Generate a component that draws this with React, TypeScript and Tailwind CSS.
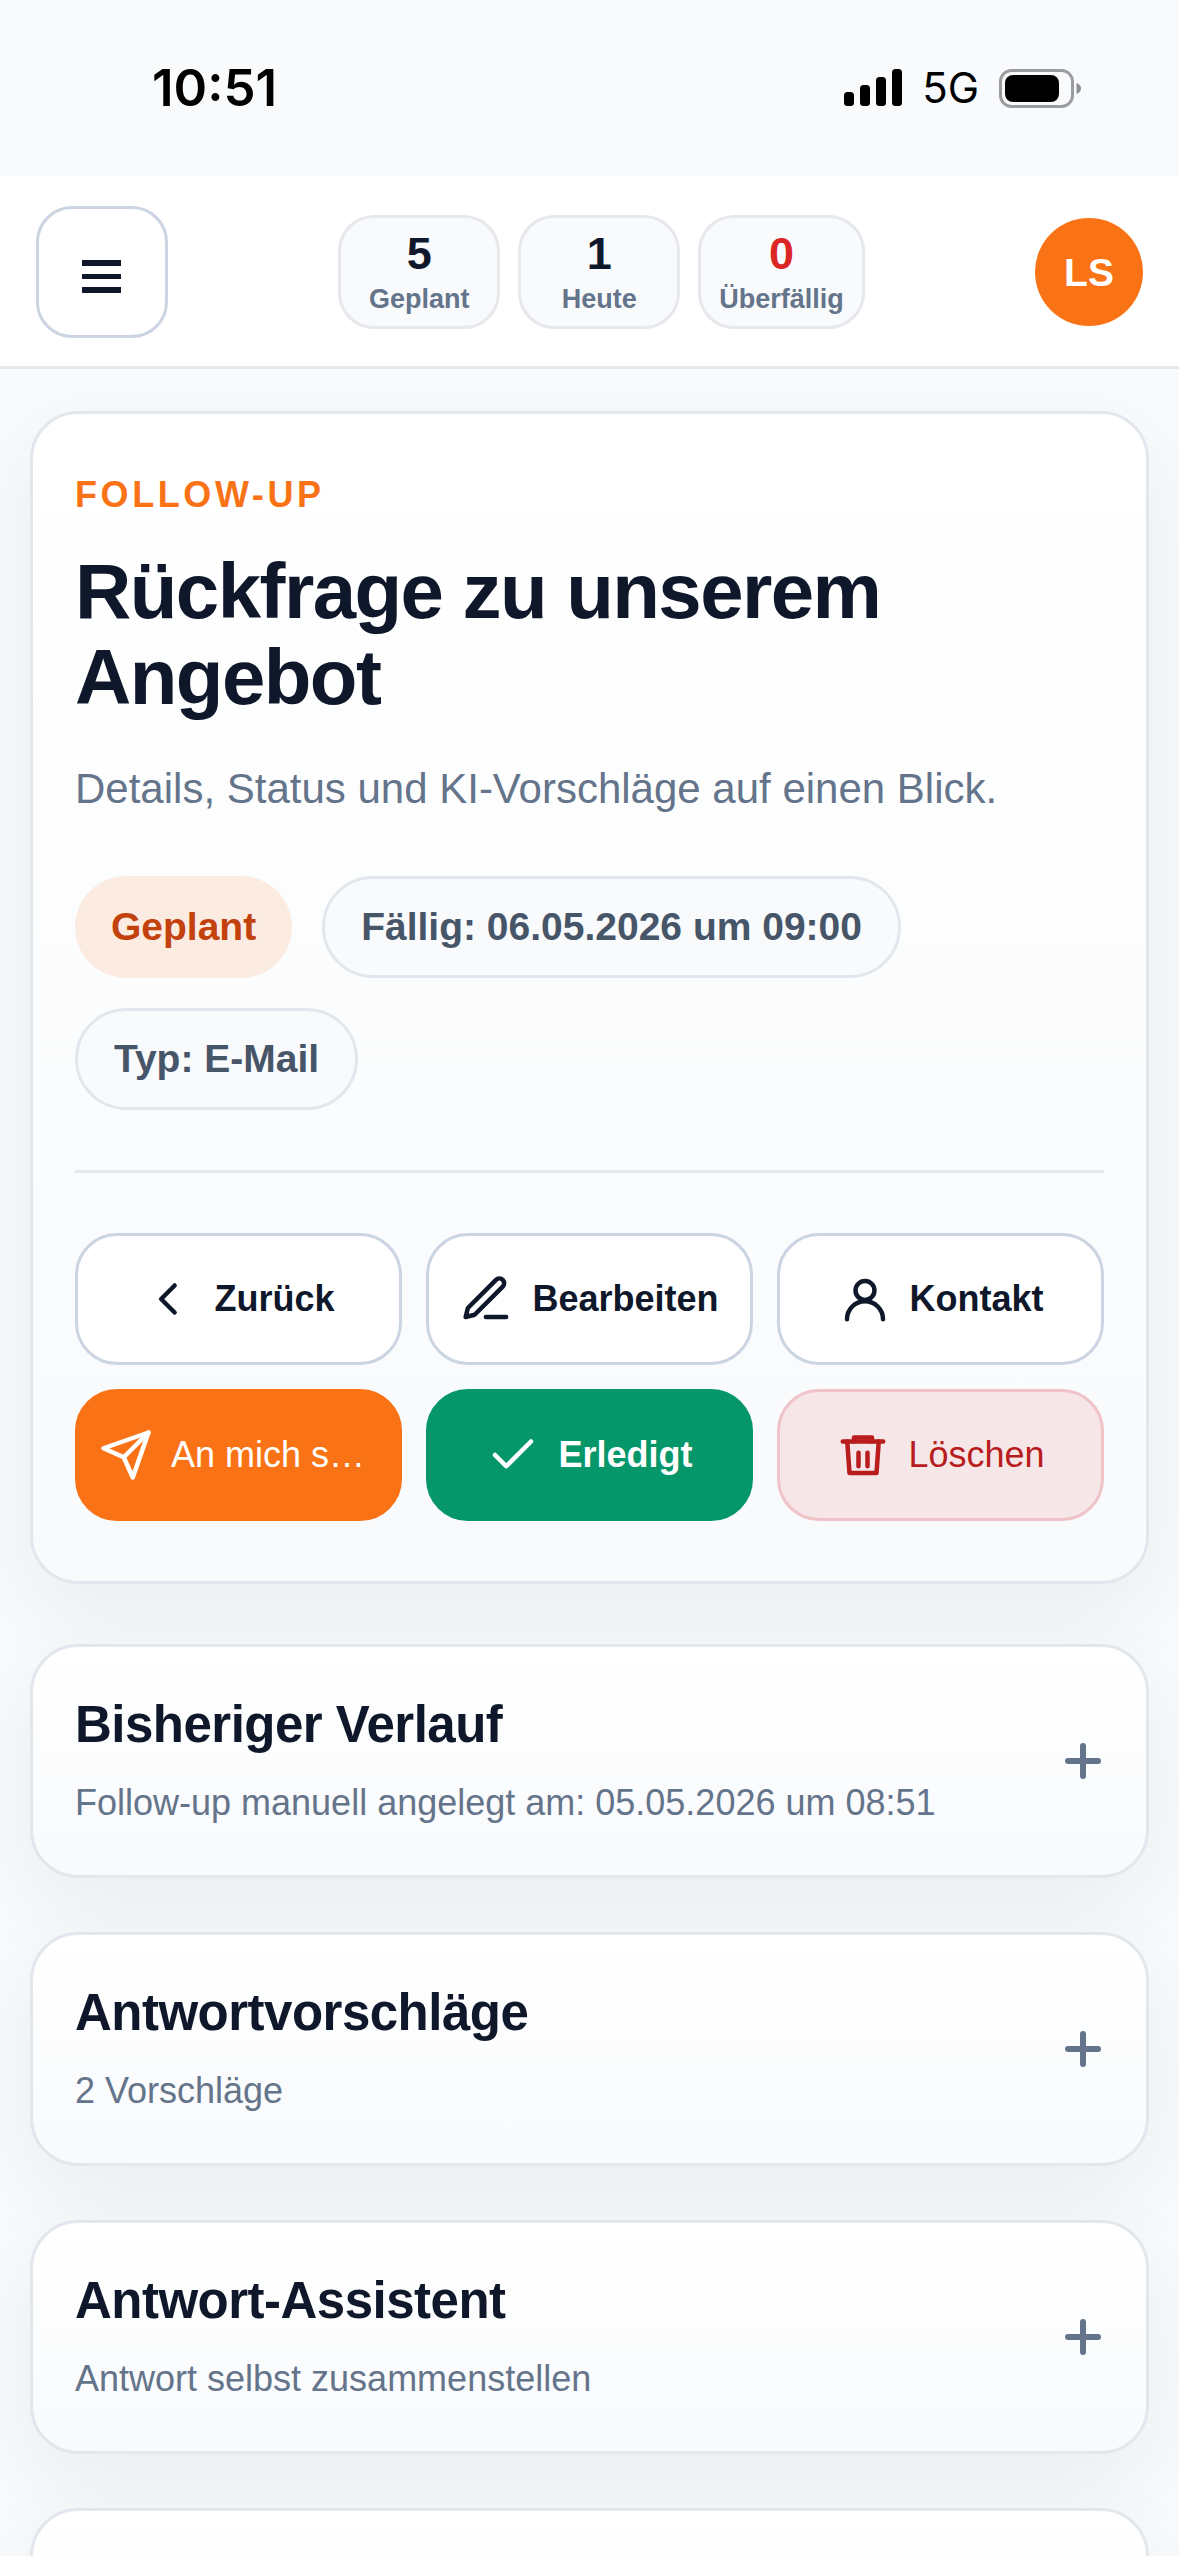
import React, { useState } from 'react'

interface Stat {
    label: string
    value: number
    danger?: boolean
}

interface Panel {
    id: string
    title: string
    subtitle: string
}

const stats: Stat[] = [
    { label: 'Geplant', value: 5 },
    { label: 'Heute', value: 1 },
    { label: 'Überfällig', value: 0, danger: true }
]

const panels: Panel[] = [
    { id: 'history', title: 'Bisheriger Verlauf', subtitle: 'Follow-up manuell angelegt am: 05.05.2026 um 08:51' },
    { id: 'suggestions', title: 'Antwortvorschläge', subtitle: '2 Vorschläge' },
    { id: 'assistant', title: 'Antwort-Assistent', subtitle: 'Antwort selbst zusammenstellen' }
]

const cardClass =
    'rounded-[48px] border-[3px] border-[#e2e6ed] bg-linear-to-b from-white to-slate-50 shadow-[0_30px_90px_rgba(15,23,42,0.06)]'

const Icon: React.FC<{ children: React.ReactNode }> = ({ children }) => (
    <svg
        viewBox="0 0 24 24"
        className="size-[54px] shrink-0"
        fill="none"
        stroke="currentColor"
        strokeWidth="2"
        strokeLinecap="round"
        strokeLinejoin="round"
        aria-hidden="true"
    >
        {children}
    </svg>
)

const StatusBar: React.FC = () => (
    <div className="flex h-[176px] shrink-0 items-center justify-between pl-[152px] pr-[98px] font-['Inter',sans-serif] text-black">
        <span className="text-[51px] leading-[60px] font-semibold">10:51</span>
        <div className="flex items-center gap-5">
            <svg viewBox="0 0 58 38" className="h-[38px] w-[58px]" aria-hidden="true">
                <rect x="0" y="23" width="10" height="14" rx="3.500" />
                <rect x="16" y="16" width="10" height="21" rx="3.500" />
                <rect x="32" y="8" width="10" height="29" rx="3.500" />
                <rect x="48" y="0" width="10" height="37" rx="3.500" />
            </svg>
            <span className="text-[42px] leading-[60px]">5G</span>
            <svg viewBox="0 0 82 39" className="h-[39px] w-[82px]" aria-hidden="true">
                <rect x="1.5" y="1.5" width="72" height="36" rx="11" fill="none" stroke="#9b9c9e" strokeWidth="3" />
                <rect x="6" y="6" width="54" height="27" rx="8" />
                <path d="M77.500 14c3 1 4.500 3 4.500 5.500s-1.500 4.500-4.500 5.500z" fill="#8e8f91" />
            </svg>
        </div>
    </div>
)

const StatChip: React.FC<{ stat: Stat }> = ({ stat }) => (
    <div className="flex min-w-[162px] flex-col items-center gap-1.5 rounded-[36px] border-[3px] border-[#e6e8ec] bg-slate-50 px-[18px] py-3 font-bold">
        <span className={`text-[45px] leading-[48px] ${stat.danger ? 'text-[#dc2626]' : 'text-[#0f172a]'}`}>{stat.value}</span>
        <span className="text-[27px] leading-[30px] text-[#64748b]">{stat.label}</span>
    </div>
)

const actionClass =
    'flex h-[132px] min-w-0 items-center justify-center gap-[18px] rounded-[42px] border-[3px] px-[21px] text-[36px] leading-[42px]'

const App: React.FC = () => {
    const [openPanel, setOpenPanel] = useState<string | null>(null)

    return (
        <div className="flex h-screen flex-col overflow-hidden bg-slate-50 font-['Liberation_Sans',Arial,sans-serif] text-[#0f172a]">
            <StatusBar />

            <header className="z-10 flex shrink-0 items-center justify-between border-b-[3px] border-[#e6e8ec] bg-white px-9 pt-[30px] pb-7">
                <button
                    type="button"
                    aria-label="Menü"
                    className="flex size-[132px] items-center justify-center rounded-[36px] border-[3px] border-[#cbd5e1] bg-white"
                >
                    <svg viewBox="0 0 48 48" className="size-12" fill="currentColor" aria-hidden="true">
                        <rect x="4" y="12" width="39" height="6" />
                        <rect x="4" y="26" width="39" height="5" />
                        <rect x="4" y="39" width="39" height="6" />
                    </svg>
                </button>
                <div className="flex gap-[18px]">
                    {stats.map((stat) => (
                        <StatChip key={stat.label} stat={stat} />
                    ))}
                </div>
                <button
                    type="button"
                    className="flex size-[108px] items-center justify-center rounded-full bg-[#f97316] text-[39px] leading-none font-bold text-white"
                >
                    LS
                </button>
            </header>

            <main className="min-h-0 flex-1 overflow-y-auto px-[30px] pt-[42px] pb-[54px] [scrollbar-width:none]">
                <section className={`${cardClass} mb-[60px] px-[42px] py-[60px]`}>
                    <p className="text-[36px] leading-[42px] font-bold tracking-widest text-[#f97316]">FOLLOW-UP</p>
                    <h1 className="mt-8 text-[78px] leading-[86px] font-bold tracking-[-0.02em]">Rückfrage zu unserem Angebot</h1>
                    <p className="mt-[42px] text-[42px] leading-[54px] text-[#64748b]">
                        Details, Status und KI-Vorschläge auf einen Blick.
                    </p>

                    <div className="mt-[60px] flex flex-wrap gap-[30px] text-[39px] leading-[60px] font-bold text-[#475569]">
                        <span className="flex items-center rounded-full bg-[#fbebe0] px-9 text-[#c2410c]">Geplant</span>
                        <span className="rounded-full border-[3px] border-[#e2e6ed] bg-slate-50 px-9 py-[18px]">
                            Fällig: 06.05.2026 um 09:00
                        </span>
                        <span className="rounded-full border-[3px] border-[#e2e6ed] bg-slate-50 px-9 py-[18px]">Typ: E-Mail</span>
                    </div>

                    <div className="mt-[60px] grid grid-cols-3 gap-6 border-t-[3px] border-[#e2e6ed] pt-[60px]">
                        <button type="button" className={`${actionClass} border-[#cbd5e1] bg-white font-bold`}>
                            <Icon>
                                <path d="M14.500 6l-6 6 6 6" />
                            </Icon>
                            <span className="truncate">Zurück</span>
                        </button>
                        <button type="button" className={`${actionClass} border-[#cbd5e1] bg-white font-bold`}>
                            <Icon>
                                <path d="M11.500 20h9" />
                                <path d="M16 3.500a2.120 2.120 0 0 1 3 3L6.500 19l-4 1 1-4z" />
                            </Icon>
                            <span className="truncate">Bearbeiten</span>
                        </button>
                        <button type="button" className={`${actionClass} border-[#cbd5e1] bg-white font-bold`}>
                            <Icon>
                                <circle cx="12" cy="8.200" r="4.200" />
                                <path d="M4 21a8 8 0 0 1 16 0" />
                            </Icon>
                            <span className="truncate">Kontakt</span>
                        </button>
                        <button type="button" className={`${actionClass} border-[#f97316] bg-[#f97316] text-white`}>
                            <Icon>
                                <path d="M22 2L11 13" />
                                <path d="M22 2l-7 20-4-9-9-4z" />
                            </Icon>
                            <span className="truncate">An mich senden</span>
                        </button>
                        <button type="button" className={`${actionClass} border-[#059669] bg-[#059669] font-bold text-white`}>
                            <Icon>
                                <path d="M20 6L9 17l-5-5" />
                            </Icon>
                            <span className="truncate">Erledigt</span>
                        </button>
                        <button type="button" className={`${actionClass} border-[#efc3c7] bg-[#f6e6e7] text-[#b91c1c]`}>
                            <Icon>
                                <path d="M3 6h18" />
                                <path d="M8 6V4.200h8V6" />
                                <path d="M5 6l1 14h12l1-14" />
                                <path d="M10 11v6M14 11v6" />
                            </Icon>
                            <span className="truncate">Löschen</span>
                        </button>
                    </div>
                </section>

                <div className="flex flex-col gap-[54px]">
                    {panels.map((panel) => (
                        <section key={panel.id} className={cardClass}>
                            <button
                                type="button"
                                aria-expanded={openPanel === panel.id}
                                onClick={() => setOpenPanel(openPanel === panel.id ? null : panel.id)}
                                className="flex w-full items-center justify-between px-[42px] py-[51px] text-left"
                            >
                                <span className="flex flex-col gap-[30px]">
                                    <span className="text-[51px] leading-[54px] font-bold tracking-[-0.01em]">{panel.title}</span>
                                    <span className="text-[36px] leading-[42px] text-[#64748b]">{panel.subtitle}</span>
                                </span>
                                <svg
                                    viewBox="0 0 42 42"
                                    className="size-[42px] shrink-0 text-[#64748b]"
                                    stroke="currentColor"
                                    strokeWidth="6"
                                    strokeLinecap="round"
                                    aria-hidden="true"
                                >
                                    <path d="M6 21h30" />
                                    {openPanel !== panel.id && <path d="M21 6v30" />}
                                </svg>
                            </button>
                        </section>
                    ))}
                    <section className={`${cardClass} h-[234px]`} />
                </div>
            </main>
        </div>
    )
}

export default App
